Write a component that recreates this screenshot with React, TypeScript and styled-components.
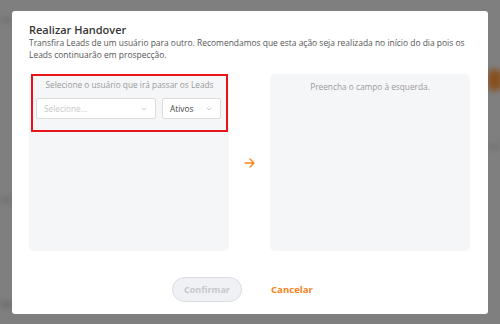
import React from "react";
import styled, { createGlobalStyle } from "styled-components";

const Global = createGlobalStyle`
  html, body { margin: 0; padding: 0; }
  body { width: 500px; height: 324px; overflow: hidden; background: #7f7f7f; font-family: "Open Sans", "Noto Sans", sans-serif; }
`;

const Page = styled.div`
  position: relative;
  width: 500px;
  height: 324px;
  overflow: hidden;
  background: #7f7f7f;
`;

const Backdrop = styled.div`
  position: absolute;
  inset: 0;
  filter: blur(3px);
  display: flex;
  flex-direction: column;
`;

const BgStripe = styled.div<{ $top: number; $h: number; $color: string; $left: number; $w: number }>`
  margin-top: ${(p) => p.$top}px;
  margin-left: ${(p) => p.$left}px;
  width: ${(p) => p.$w}px;
  height: ${(p) => p.$h}px;
  background: ${(p) => p.$color};
  border-radius: 3px;
`;

const Modal = styled.div`
  position: absolute;
  left: 12px;
  top: 11px;
  width: 476px;
  height: 303px;
  background: #fff;
  border-radius: 3px;
  box-sizing: border-box;
  padding: 12px 17px 0 17px;
  display: flex;
  flex-direction: column;
`;

const Title = styled.h2`
  margin: 0;
  font-size: 11px;
  font-weight: 600;
  color: #363636;
  line-height: 14px;
`;

const Desc = styled.p`
  margin: 0;
  max-width: 442px;
  font-size: 8.45px;
  color: #555;
  line-height: 12px;
`;

const Columns = styled.div`
  margin-top: 13px;
  display: grid;
  grid-template-columns: 200px 41px 200px;
  height: 177px;
`;

const Panel = styled.div`
  background: #f5f6f8;
  border-radius: 5px;
  display: flex;
  flex-direction: column;
  align-items: stretch;
`;

const Highlight = styled.div`
  margin: 0 0 0 2px;
  width: 197px;
  height: 58px;
  box-sizing: border-box;
  border: 2.7px solid #e6151b;
  padding: 3px 3px 0 3px;
  display: flex;
  flex-direction: column;
  align-items: stretch;
`;

const Label = styled.div`
  text-align: center;
  font-size: 8.3px;
  color: #9a9a9a;
  line-height: 12px;
`;

const EmptyText = styled(Label)`
  margin-top: 7px;
`;

const SelectRow = styled.div`
  margin-top: 7px;
  display: flex;
  gap: 6px;
`;

const Select = styled.div<{ $w: number; $muted?: boolean }>`
  width: ${(p) => p.$w}px;
  height: 21px;
  box-sizing: border-box;
  background: #fff;
  border: 1px solid #dcdcdc;
  border-radius: 2px;
  display: flex;
  align-items: center;
  justify-content: space-between;
  padding: 0 8px 0 7px;
  font-size: 8.3px;
  color: ${(p) => (p.$muted ? "#c9c9c9" : "#444")};
`;

const ArrowCell = styled.div`
  display: flex;
  align-items: center;
  justify-content: center;
`;

const Footer = styled.div`
  margin-top: 26px;
  display: flex;
  align-items: center;
  padding-left: 143px;
  gap: 29px;
`;

const Confirm = styled.button`
  width: 70px;
  height: 25px;
  border-radius: 13px;
  border: 1px solid #dcdde2;
  background: #f0f1f4;
  color: #c7c8cc;
  font-family: inherit;
  font-weight: 700;
  font-size: 9px;
  padding: 0;
`;

const Cancel = styled.button`
  border: none;
  background: none;
  padding: 0;
  color: #f7821b;
  font-family: inherit;
  font-weight: 700;
  font-size: 9.6px;
`;

const Chevron = () => (
  <svg width="6" height="4" viewBox="0 0 6 4" fill="none" stroke="#c4c4c4" strokeWidth="0.9" strokeLinecap="round" strokeLinejoin="round">
    <path d="M1 1l2 2 2-2" />
  </svg>
);

export default function App() {
  return (
    <Page>
      <Global />
      <Backdrop>
        <BgStripe $top={18} $h={4} $color="#6e6e6e" $left={0} $w={14} />
        <BgStripe $top={48} $h={20} $color="#8a4d1a" $left={488} $w={14} />
        <BgStripe $top={54} $h={4} $color="#6c6c6c" $left={488} $w={12} />
        <BgStripe $top={50} $h={4} $color="#6e6e6e" $left={0} $w={14} />
        <BgStripe $top={100} $h={5} $color="#6c6c6c" $left={0} $w={14} />
      </Backdrop>
      <Modal>
        <Title>Realizar Handover</Title>
        <Desc>
          Transfira Leads de um usuário para outro. Recomendamos que esta ação seja realizada no início do dia pois os
          Leads continuarão em prospecção.
        </Desc>
        <Columns>
          <Panel>
            <Highlight>
              <Label>Selecione o usuário que irá passar os Leads</Label>
              <SelectRow>
                <Select $w={120} $muted>
                  <span>Selecione...</span>
                  <Chevron />
                </Select>
                <Select $w={59}>
                  <span>Ativos</span>
                  <Chevron />
                </Select>
              </SelectRow>
            </Highlight>
          </Panel>
          <ArrowCell>
            <svg width="11" height="10" viewBox="0 0 11 10" fill="none" stroke="#f7821b" strokeWidth="1.3" strokeLinecap="round" strokeLinejoin="round">
              <path d="M1 5h9M6 1l4 4-4 4" />
            </svg>
          </ArrowCell>
          <Panel>
            <EmptyText>Preencha o campo à esquerda.</EmptyText>
          </Panel>
        </Columns>
        <Footer>
          <Confirm>Confirmar</Confirm>
          <Cancel>Cancelar</Cancel>
        </Footer>
      </Modal>
    </Page>
  );
}
